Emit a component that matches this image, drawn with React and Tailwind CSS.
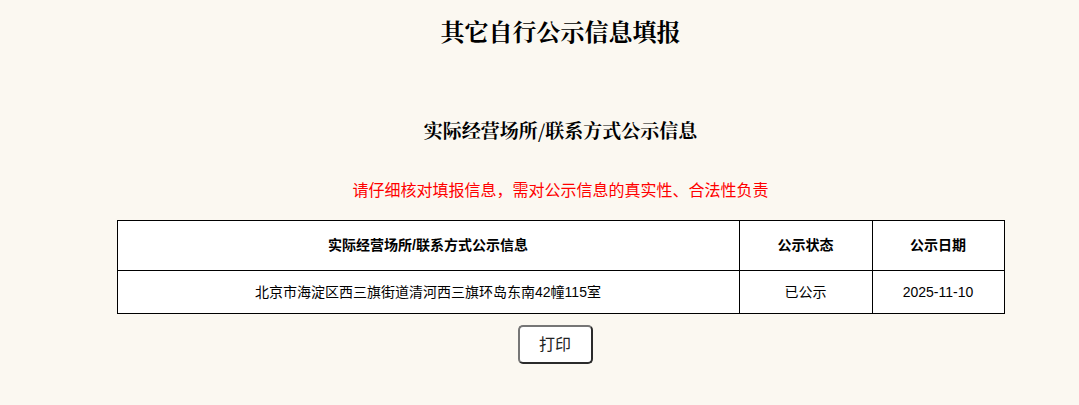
export default function App() {
  const serif = { fontFamily: '"Noto Serif CJK SC", "Noto Sans CJK SC", serif' };
  return (
    <div
      className="min-h-screen w-full bg-[#fbf8f1] text-black flex flex-col items-center pl-[42px]"
      style={{ fontFamily: '"Liberation Sans", "Noto Sans CJK SC", sans-serif' }}
    >
      <h1 className="mt-[15px] h-[32px] leading-[32px] text-[24px] font-bold" style={serif}>
        其它自行公示信息填报
      </h1>

      <h2 className="mt-[68px] h-[30px] leading-[30px] text-[19px] font-bold" style={serif}>
        实际经营场所/联系方式公示信息
      </h2>

      <p className="mt-[34px] h-[24px] leading-[24px] text-[16px] text-[#ff0000]">
        请仔细核对填报信息，需对公示信息的真实性、合法性负责
      </p>

      <table className="mt-[17px] w-[888px] border-collapse bg-white text-[14px]">
        <thead>
          <tr className="h-[50px]">
            <th className="w-[622px] border border-black font-bold">实际经营场所/联系方式公示信息</th>
            <th className="w-[133px] border border-black font-bold">公示状态</th>
            <th className="border border-black font-bold">公示日期</th>
          </tr>
        </thead>
        <tbody>
          <tr className="h-[43px]">
            <td className="border border-black text-center">北京市海淀区西三旗街道清河西三旗环岛东南42幢115室</td>
            <td className="border border-black text-center">已公示</td>
            <td className="border border-black text-center">2025-11-10</td>
          </tr>
        </tbody>
      </table>

      <button className="mt-[11px] mr-[11px] w-[75px] h-[39px] bg-white rounded-[5px] border-2 border-t-[#767676] border-l-[#767676] border-r-[#2b2b2b] border-b-[#2b2b2b] text-[16px] text-[#222]">
        打印
      </button>
    </div>
  );
}
